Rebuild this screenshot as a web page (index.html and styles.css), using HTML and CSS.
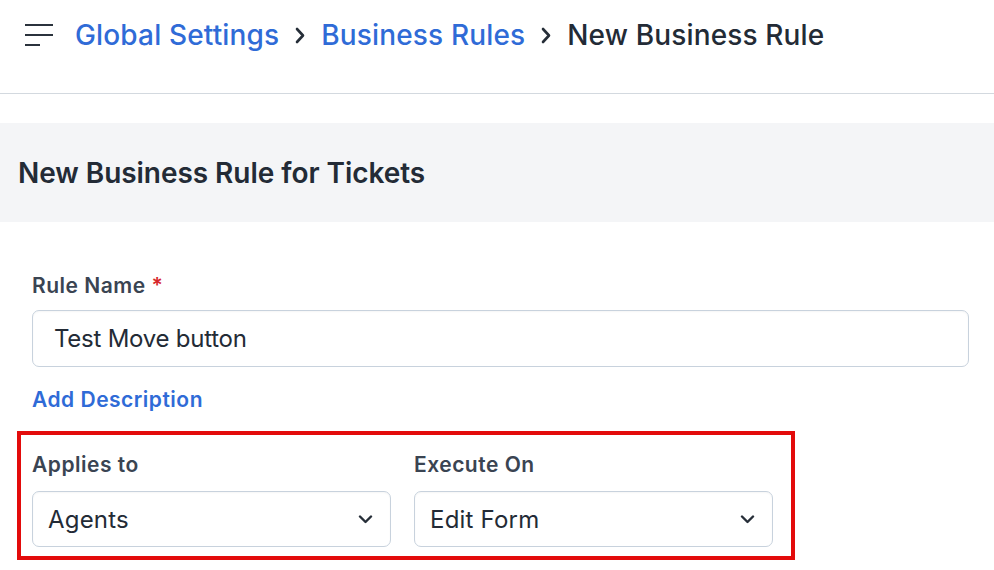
FILE: index.html
```html
<!DOCTYPE html>
<html lang="en">
<head>
<meta charset="utf-8">
<title>New Business Rule</title>
<link rel="stylesheet" href="styles.css">
</head>
<body>
<header class="topbar">
  <div class="topbar-row">
    <svg class="menu-icon" width="28" height="22" viewBox="0 0 28 22" aria-hidden="true">
      <path d="M0 1H28M0 11H28M0 21H15" stroke="#2b333d" stroke-width="2.2" fill="none"/>
    </svg>
    <nav class="crumbs">
      <a class="crumb-link" href="#">Global Settings</a>
      <svg class="crumb-sep" width="10" height="17" viewBox="0 0 10 17" aria-hidden="true">
        <path d="M2 2L8 8.5L2 15" stroke="#262e38" stroke-width="2.6" fill="none" stroke-linecap="round" stroke-linejoin="round"/>
      </svg>
      <a class="crumb-link" href="#">Business Rules</a>
      <svg class="crumb-sep" width="10" height="17" viewBox="0 0 10 17" aria-hidden="true">
        <path d="M2 2L8 8.5L2 15" stroke="#262e38" stroke-width="2.6" fill="none" stroke-linecap="round" stroke-linejoin="round"/>
      </svg>
      <span class="crumb-current">New Business Rule</span>
    </nav>
  </div>
</header>

<section class="title-panel">
  <h1 class="title">New Business Rule for Tickets</h1>
</section>

<main class="form">
  <label class="field-label">Rule Name <span class="req">*</span></label>
  <div class="text-input">Test Move button</div>
  <a class="add-desc" href="#">Add Description</a>

  <div class="highlight">
    <div class="field">
      <label class="field-label">Applies to</label>
      <div class="select">
        <span>Agents</span>
        <svg width="15" height="9" viewBox="0 0 15 9" aria-hidden="true">
          <path d="M2 1.5L7.5 7L13 1.5" stroke="#262e38" stroke-width="2.4" fill="none" stroke-linecap="round" stroke-linejoin="round"/>
        </svg>
      </div>
    </div>
    <div class="field">
      <label class="field-label">Execute On</label>
      <div class="select">
        <span>Edit Form</span>
        <svg width="15" height="9" viewBox="0 0 15 9" aria-hidden="true">
          <path d="M2 1.5L7.5 7L13 1.5" stroke="#262e38" stroke-width="2.4" fill="none" stroke-linecap="round" stroke-linejoin="round"/>
        </svg>
      </div>
    </div>
  </div>
</main>
</body>
</html>
```

FILE: styles.css
```css
* { box-sizing: border-box; }

html, body {
  margin: 0;
  padding: 0;
  background: #ffffff;
  font-family: Inter, "Noto Sans", "Liberation Sans", sans-serif;
  color: #232b36;
  overflow: hidden;
}

.topbar {
  height: 94px;
  border-bottom: 1px solid #d3d9df;
  padding-left: 25px;
}

.topbar-row {
  height: 70px;
  display: flex;
  align-items: center;
}

.menu-icon {
  display: block;
  flex: none;
  margin-right: 22px;
}

.crumbs {
  display: flex;
  align-items: center;
  gap: 16px;
  font-size: 28px;
  font-weight: 500;
  letter-spacing: 0.15px;
}

.crumb-link {
  color: #2f6bd7;
  text-decoration: none;
}

.crumb-current {
  color: #232b36;
}

.crumb-sep {
  display: block;
  flex: none;
}

.title-panel {
  margin-top: 29px;
  height: 99px;
  background: #f4f5f7;
  display: flex;
  align-items: center;
  padding-left: 18px;
}

.title {
  margin: 0;
  font-size: 28px;
  font-weight: 600;
  color: #232b36;
  letter-spacing: -0.05px;
}

.form {
  padding: 51px 25px 0 32px;
  display: flex;
  flex-direction: column;
  align-items: flex-start;
}

.field-label {
  display: block;
  font-size: 21px;
  line-height: 25px;
  font-weight: 600;
  letter-spacing: 0.5px;
  color: #3a4452;
}

.req {
  color: #d7262b;
}

.text-input {
  margin-top: 12px;
  width: 100%;
  height: 57px;
  border: 1px solid #c8d2dd;
  border-radius: 7px;
  padding-left: 21px;
  display: flex;
  align-items: center;
  font-size: 24px;
  letter-spacing: -0.25px;
  color: #232b36;
  box-shadow: inset 0 1px 2px rgba(0, 0, 0, 0.04);
}

.add-desc {
  margin-top: 20px;
  font-size: 21px;
  line-height: 25px;
  font-weight: 600;
  letter-spacing: 0.5px;
  color: #2f6bd7;
  text-decoration: none;
}

.highlight {
  margin-top: 19px;
  margin-left: -15px;
  width: 778px;
  border: 4px solid #e30b0b;
  padding: 17px 18px 9px 11px;
  display: grid;
  grid-template-columns: 359px 359px;
  column-gap: 23px;
}

.field .select {
  margin-top: 14px;
}

.select {
  height: 56px;
  border: 1px solid #c8d2dd;
  border-radius: 7px;
  padding: 0 17px 0 15px;
  display: flex;
  align-items: center;
  justify-content: space-between;
  font-size: 24px;
  letter-spacing: 0.2px;
  color: #232b36;
  box-shadow: inset 0 1px 2px rgba(0, 0, 0, 0.04);
}

.select svg {
  display: block;
  flex: none;
}
```
